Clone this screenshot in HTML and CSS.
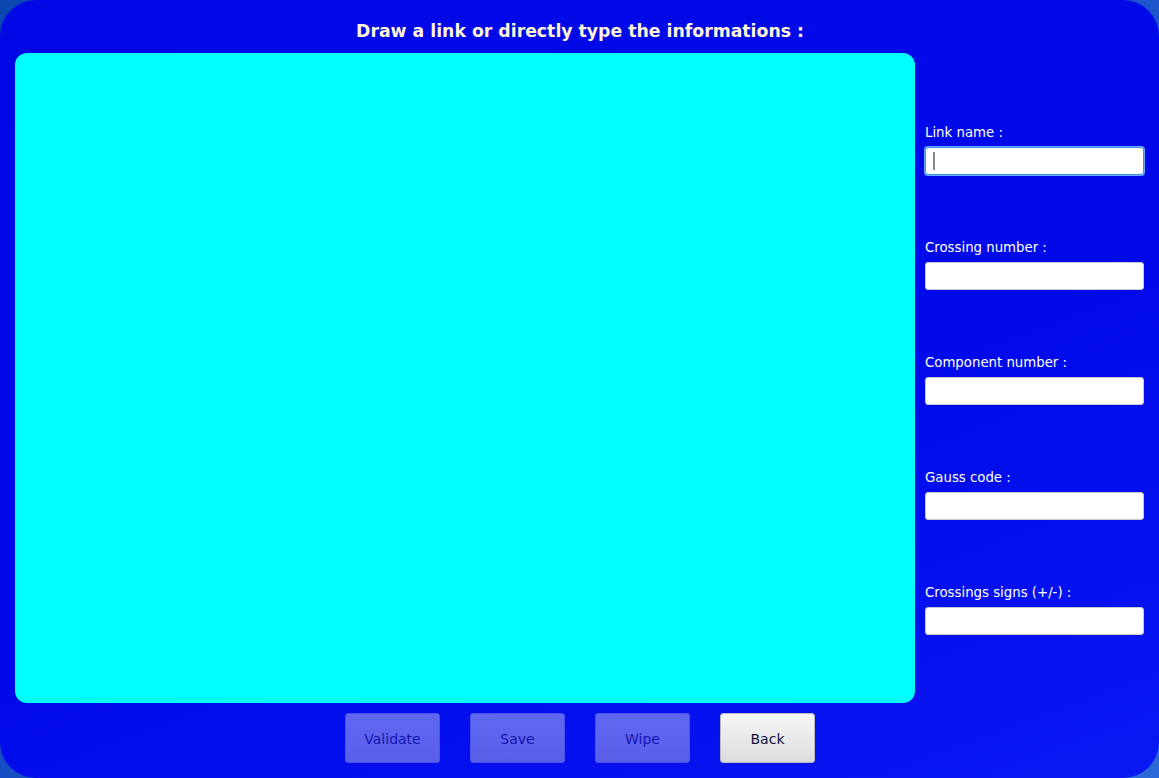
FILE: index.html
```html
<!DOCTYPE html>
<html>
<head>
<meta charset="utf-8">
<link rel="stylesheet" href="styles.css">
</head>
<body>
<div class="window">
  <div class="title">Draw a link or directly type the informations :</div>
  <div class="main">
    <div class="canvas"></div>
    <div class="side">
      <div class="group">
        <div class="label">Link name :</div>
        <div class="field focused"><span class="caret"></span></div>
      </div>
      <div class="group">
        <div class="label">Crossing number :</div>
        <div class="field"></div>
      </div>
      <div class="group">
        <div class="label">Component number :</div>
        <div class="field"></div>
      </div>
      <div class="group">
        <div class="label">Gauss code :</div>
        <div class="field"></div>
      </div>
      <div class="group">
        <div class="label">Crossings signs (+/-) :</div>
        <div class="field"></div>
      </div>
    </div>
  </div>
  <div class="buttons">
    <div class="btn disabled">Validate</div>
    <div class="btn disabled">Save</div>
    <div class="btn disabled">Wipe</div>
    <div class="btn back">Back</div>
  </div>
</div>
</body>
</html>
```
FILE: styles.css
```css
html, body {
  margin: 0;
  padding: 0;
}
body {
  width: 1159px;
  height: 778px;
  overflow: hidden;
  background: linear-gradient(135deg, #0a48b0 0%, #1a50c8 50%, #2a6ad8 100%);
  font-family: "DejaVu Sans", sans-serif;
}
.window {
  width: 1159px;
  height: 778px;
  box-sizing: border-box;
  border-radius: 36px;
  background: linear-gradient(160deg, #0008e6 0%, #000aea 60%, #0a18f2 100%);
  display: flex;
  flex-direction: column;
  padding: 0 15px;
  overflow: hidden;
}
.title {
  height: 53px;
  box-sizing: border-box;
  padding-top: 19px;
  padding-left: 1px;
  text-align: center;
  color: #fff4d8;
  font-weight: bold;
  font-size: 17.3px;
  line-height: 24px;
}
.main {
  display: flex;
  gap: 10px;
  height: 650px;
}
.canvas {
  width: 900px;
  height: 650px;
  background: #00ffff;
  border-radius: 12px;
  flex: none;
}
.side {
  width: 219px;
  flex: none;
  padding-top: 69px;
  display: flex;
  flex-direction: column;
  gap: 62px;
}
.group {
  display: flex;
  flex-direction: column;
  gap: 5px;
}
.label {
  color: #ffffff;
  font-size: 13.3px;
  line-height: 21px;
  height: 20px;
  white-space: nowrap;
}
.field {
  height: 28px;
  box-sizing: border-box;
  background: #ffffff;
  border: 1px solid #c8c8d0;
  border-radius: 3px;
  position: relative;
}
.field.focused {
  border: 1px solid #3a8ef0;
  box-shadow: 0 0 0 1px #6aaef8;
}
.caret {
  position: absolute;
  left: 7px;
  top: 4px;
  width: 2px;
  height: 18px;
  background: #8a8a8a;
}
.buttons {
  display: flex;
  justify-content: center;
  gap: 30px;
  padding-top: 10px;
  padding-left: 1px;
}
.btn {
  width: 95px;
  height: 50px;
  box-sizing: border-box;
  display: flex;
  align-items: center;
  justify-content: center;
  border-radius: 3px;
  font-size: 14px;
  padding-top: 2px;
}
.btn.disabled {
  background: linear-gradient(#6068f2, #5a5fe8);
  border: 1px solid #4a52e8;
  color: #1616b0;
}
.btn.back {
  background: linear-gradient(#f6f6f6, #dcdcdc);
  border: 1px solid #b8b8c0;
  color: #101040;
}
```
